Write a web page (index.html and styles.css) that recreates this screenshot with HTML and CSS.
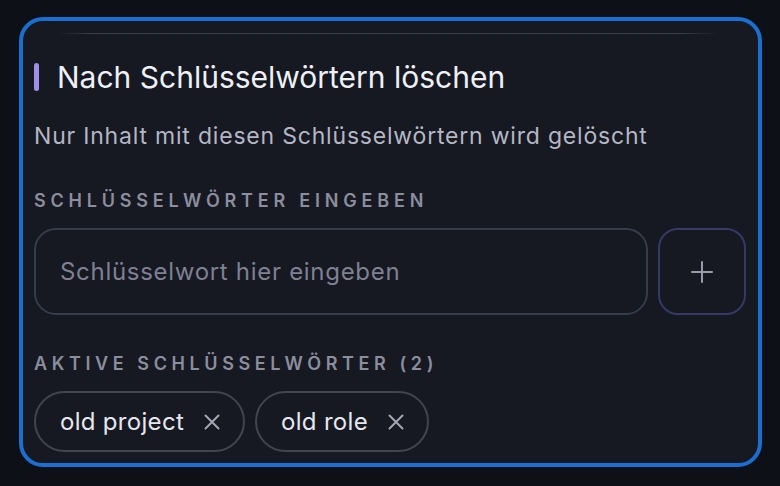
FILE: index.html
```html
<!DOCTYPE html>
<html lang="de">
<head>
<meta charset="utf-8">
<title>Nach Schlüsselwörtern löschen</title>
<link rel="stylesheet" href="styles.css">
</head>
<body>
<div class="card">
  <div class="divider"></div>
  <h2 class="title"><span class="accent"></span><span>Nach Schlüsselwörtern löschen</span></h2>
  <p class="subtitle">Nur Inhalt mit diesen Schlüsselwörtern wird gelöscht</p>
  <div class="label label-input">Schlüsselwörter eingeben</div>
  <div class="input-row">
    <div class="input"><span class="placeholder">Schlüsselwort hier eingeben</span></div>
    <button class="add-btn" type="button" aria-label="Hinzufügen">
      <svg width="22" height="22" viewBox="0 0 22 22"><path d="M11 1V21M1 11H21" stroke="#9a9cab" stroke-width="2" stroke-linecap="round" fill="none"/></svg>
    </button>
  </div>
  <div class="label label-active">Aktive Schlüsselwörter (2)</div>
  <div class="chips">
    <div class="chip"><span>old project</span><svg class="x" width="16" height="16" viewBox="0 0 16 16"><path d="M1.5 1.5L14.5 14.5M14.5 1.5L1.5 14.5" stroke="#a3a5b3" stroke-width="2" stroke-linecap="round" fill="none"/></svg></div>
    <div class="chip"><span>old role</span><svg class="x" width="16" height="16" viewBox="0 0 16 16"><path d="M1.5 1.5L14.5 14.5M14.5 1.5L1.5 14.5" stroke="#a3a5b3" stroke-width="2" stroke-linecap="round" fill="none"/></svg></div>
  </div>
</div>
</body>
</html>
```
FILE: styles.css
```css
* { box-sizing: border-box; }
html, body { margin: 0; padding: 0; }
body {
  background: #0e1017;
  font-family: Inter, "Noto Sans", "Liberation Sans", sans-serif;
  padding: 17px 18px 19px 19px;
  width: 780px;
  height: 486px;
  overflow: hidden;
}
.card {
  height: 450px;
  border: 4px solid #1b6fd1;
  border-radius: 24px;
  background: #161822;
  padding: 12px 12px 0 11px;
}
.divider {
  height: 1px;
  margin: 0 26px 25px 24px;
  background: linear-gradient(90deg, rgba(60,63,76,0) 0%, #3a3d4a 5%, #3a3d4a 94%, rgba(60,63,76,0) 100%);
}
.title {
  margin: 0;
  display: flex;
  align-items: center;
  gap: 18px;
  font-size: 30px;
  line-height: 36px;
  font-weight: 400;
  color: #eef0f6;
}
.accent {
  width: 5px;
  height: 28px;
  border-radius: 3px;
  background: #a08ee8;
}
.subtitle {
  margin: 27px 0 0;
  font-size: 23px;
  line-height: 28px;
  letter-spacing: 0.8px;
  color: #b4b7c4;
}
.label {
  font-size: 18px;
  line-height: 22px;
  font-weight: 600;
  letter-spacing: 4.8px;
  text-transform: uppercase;
  color: #8b8e9c;
}
.label-input { margin-top: 40px; }
.label-active { margin-top: 38px; letter-spacing: 4.6px; }
.input-row {
  margin-top: 16px;
  display: flex;
  gap: 10px;
}
.input {
  flex: 1;
  height: 87px;
  border: 2px solid #383b49;
  border-radius: 22px;
  display: flex;
  align-items: center;
  padding-left: 24px;
}
.placeholder {
  font-size: 24px;
  letter-spacing: 0.7px;
  color: #7e8191;
}
.add-btn {
  width: 88px;
  height: 87px;
  border: 2px solid #393766;
  border-radius: 20px;
  background: transparent;
  display: flex;
  align-items: center;
  justify-content: center;
  padding: 0;
}
.chips {
  margin-top: 16px;
  display: flex;
  gap: 10px;
}
.chip {
  height: 61px;
  border: 2px solid #42454f;
  border-radius: 31px;
  display: flex;
  align-items: center;
  gap: 20px;
  padding: 0 23px 0 24px;
  font-size: 24px;
  letter-spacing: 0.3px;
  color: #e6e7ee;
}
.x { display: block; }
```
